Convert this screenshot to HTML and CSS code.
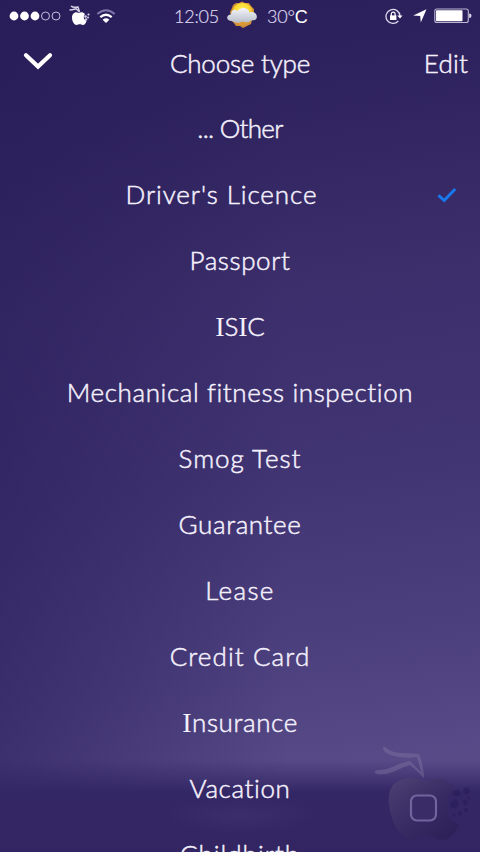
FILE: index.html
```html
<!DOCTYPE html>
<html lang="en">
<head>
<meta charset="utf-8">
<title>Choose type</title>
<link rel="stylesheet" href="styles.css">
</head>
<body>
<div class="screen">
  <header class="status">
    <div class="status-left">
      <svg class="signal" width="52" height="10" viewBox="0 0 52 10"><g fill="#fff"><circle cx="5" cy="5" r="4.400"/><circle cx="15.500" cy="5" r="4.400"/><circle cx="26" cy="5" r="4.400"/></g><g fill="none" stroke="#c4bddb" stroke-width="1"><circle cx="36.500" cy="5" r="4"/><circle cx="47" cy="5" r="4"/></g></svg>
      <svg class="carrier" width="22" height="22" viewBox="0 0 22 22"><path fill="#fff" d="M9.500 8C6 6 3 9 3 12.500C3 16 5 20 7.500 20C9 20 9.500 19.300 10.700 19.300C12 19.300 12.500 20 14 20C15.500 20 17 18 17.500 16C14.500 14.500 14 11.500 16 9C14 6.500 11.500 7 9.500 8Z"/><path d="M2 1Q4 3 9 2L10.500 7M.5 5Q3 5 7 3.800L10.500 7" fill="none" stroke="#d8d2e8" stroke-width="1.500"/><g fill="#d8d2e8"><circle cx="16.500" cy="11.500" r="1.300"/><circle cx="19.500" cy="9.500" r="1.100"/><circle cx="17" cy="14.500" r="1.300"/><circle cx="19" cy="12.500" r="1"/></g></svg>
      <svg class="wifi" width="20" height="15" viewBox="0 0 20 15"><path d="M1.300 5Q10-2.500 18.700 5" fill="none" stroke="#8176aa" stroke-width="1.700"/><path d="M4.300 8.200Q10 3.300 15.700 8.200" fill="none" stroke="#fff" stroke-width="2.200"/><path d="M6.600 10.700Q10 8 13.400 10.700L10 14Z" fill="#fff"/></svg>
    </div>
    <div class="status-mid">
      <span class="time">12:05</span>
      <svg class="weather" width="32" height="28" viewBox="0 0 32 28"><defs><radialGradient id="sun" cx=".5" cy=".3"><stop offset="0" stop-color="#fff45a"/><stop offset=".7" stop-color="#fbd52c"/><stop offset="1" stop-color="#dc9a35"/></radialGradient><linearGradient id="cloud" x2="0" y2="1"><stop offset="0" stop-color="#f4f5f9"/><stop offset="1" stop-color="#b7bdcb"/></linearGradient></defs><path fill="#cf8f39" d="M10 2L13 2L16 .5L19 2L23 2L25 5L28 8L28 12L29 15L26 19L25 23L21 25L17 27L14 25L10 25L7 21L4 19L5 15L4 11L6 7L7 4Z"/><circle cx="16.500" cy="13" r="11" fill="url(#sun)"/><path d="M6 20C-.5 20 0 13.500 5 13.500C5 9 9 7.500 11.500 10C15 5 23 7 23.500 11.500C29 9.500 32 14.500 30.500 17.500C29 20 26 19 25 19.500C21 23 18 20.500 16.500 20.500C12 23 9 21.500 6 20Z" fill="url(#cloud)"/></svg>
      <span class="temp">30°<b>C</b></span>
    </div>
    <div class="status-right">
      <svg class="lock" width="18" height="17" viewBox="0 0 18 17"><path d="M13.300 13A7 7 0 1 1 15 8" fill="none" stroke="#ddd8ec" stroke-width="1.300"/><path d="M12.300 7.500H17.500L15 10.600Z" fill="#fff"/><rect x="5" y="7.400" width="6.400" height="4.600" fill="#fff"/><path d="M6.300 8V6A1.900 1.900 0 0 1 10.100 6V8" fill="none" stroke="#fff" stroke-width="1.200"/></svg>
      <svg class="arrow" width="14" height="14" viewBox="0 0 14 14"><path d="M13.500 .3L7.800 13.600L7.200 7L.2 6.500Z" fill="#fff"/></svg>
      <svg class="battery" width="38" height="16" viewBox="0 0 38 16"><rect x=".8" y="1" width="33.500" height="13.500" rx="2" fill="none" stroke="#bdb6d3" stroke-width="1.100"/><rect x="2" y="2.300" width="26.500" height="11" rx=".8" fill="#fff"/><path d="M35.200 5.500Q37.500 5.500 37.500 7.800Q37.500 10 35.200 10Z" fill="#ded9ea"/></svg>
    </div>
  </header>
  <nav class="bar">
    <svg class="chevron" width="30" height="20" viewBox="0 0 30 20"><path d="M3 3.200L15 14.500L27 3.200" fill="none" stroke="#fff" stroke-width="4.200" stroke-linecap="round"/></svg>
    <span class="title">Choose type</span>
    <span class="edit">Edit</span>
  </nav>
  <ul class="list">
    <li><span class="t-other">... Other</span></li>
    <li class="selected"><span class="t-driver">Driver's Licence</span><svg class="check" width="22" height="18" viewBox="0 0 22 18"><path d="M2.500 9.300L8.200 14.500L19.200 3" fill="none" stroke="#1878ee" stroke-width="3"/></svg></li>
    <li><span>Passport</span></li>
    <li><span class="t-isic"><i>I</i>S<i>I</i>C</span></li>
    <li><span>Mechanical fitness inspection</span></li>
    <li><span class="t-smog">Smog Test</span></li>
    <li><span>Guarantee</span></li>
    <li><span class="t-lease">Lease</span></li>
    <li><span class="t-credit">Credit Card</span></li>
    <li><span><i>I</i>nsurance</span></li>
    <li><span>Vacation</span></li>
    <li><span class="t-child">Childbirth</span></li>
  </ul>
  <svg class="touch" width="110" height="110" viewBox="0 0 110 110"><defs><linearGradient id="body" x1="0" y1="0" x2="1" y2="1"><stop offset="0" stop-color="#524675"/><stop offset=".55" stop-color="#382a62"/><stop offset="1" stop-color="#291c54"/></linearGradient></defs><path fill="url(#body)" fill-opacity=".8" d="M53 43C44 37 30 40 23 46C16 53 17 66 20 77C24 91 31 101 40 102C48 102 49 98 56 98C63 98 64 102 73 102C80 101 85 94 88 86C80 84 76 79 76 72C76 62 78 56 84 50C76 39 64 39 53 43Z"/><path fill="#7d719f" fill-opacity=".48" d="M14 9C22 16 31 15 43 15.500L48 16C51 22 53 33 53 40L46 33L39 27C29 29 21 38 6 36C2 35 4 32 7 32C20 32 24 26 39 23L50 34L46 19C36 21 15 19 12 11C12 9 13 8 14 9Z"/><g fill="#201751" fill-opacity=".35"><path d="M82 53l6-1 2 4-4 3-4-2zM93 50l5-1 1 5-4 3-3-3zM79 64l6-3 3 5-3 5-6-2zM91 63l4-2 2 4-3 3zM87 74l4-1v5l-4-1z"/><circle cx="98" cy="60" r="1.500"/><circle cx="95" cy="72" r="2"/><circle cx="83" cy="77" r="1.500"/></g><rect x="40" y="57.500" width="25" height="25" rx="6" fill="#392c67" stroke="#7165a0" stroke-width="2.200"/></svg>
</div>
</body>
</html>
```
FILE: styles.css
```css
* { box-sizing: border-box; }
body { margin: 0; }
.screen {
  position: relative;
  width: 480px;
  height: 852px;
  overflow: hidden;
  color: #f4f0fc;
  font-family: Lato, "Liberation Sans", sans-serif;
  font-weight: 300;
  font-variant-ligatures: none;
  -webkit-text-stroke: .5px currentColor;
  background:
    radial-gradient(ellipse 75px 18px at 240px 816px, rgba(72, 57, 118, .4), transparent),
    linear-gradient(to bottom, transparent 760px, #342765 792px, #322562 852px),
    linear-gradient(to right, rgba(38, 27, 88, .5), transparent 60%),
    linear-gradient(172deg, #2a1e5a 0, #2f235f 14%, #3b2e6b 35%, #413472 55%, #4d407e 76%, #584b88 90%);
}
.status { display: grid; grid-template-columns: 172px 1fr 95px; height: 32px; }
.status-left { display: flex; align-items: center; padding-left: 9px; }
.carrier { margin-left: 8px; }
.wifi { margin-left: 5px; }
.status-mid { display: flex; align-items: center; font-size: 18px; white-space: nowrap; -webkit-text-stroke: .2px currentColor; }
.time { width: 45px; margin-left: 2px; letter-spacing: -.2px; color: #ddd7ee; }
.weather { margin: -2px 9px 0 7px; }
.temp { letter-spacing: -.2px; color: #ddd7ee; }
.temp b { font-family: "Liberation Sans", sans-serif; font-weight: 400; color: #fff; -webkit-text-stroke: 0; }
.status-right { display: flex; align-items: center; }
.arrow { margin-left: 10px; }
.battery { margin-left: 7px; }
.bar { display: grid; grid-template-columns: 100px 1fr 100px; align-items: center; height: 64px; padding-bottom: 2px; font-size: 26px; }
.chevron { margin: -3px 0 0 23px; }
.title { text-align: center; white-space: nowrap; letter-spacing: -.2px; }
.edit { justify-self: end; margin-right: 12px; letter-spacing: .2px; }
.list { margin: 0; padding: 0; list-style: none; font-size: 26px; }
.list li { display: grid; grid-template-columns: 60px 1fr 60px; align-items: center; height: 66px; }
.list li.selected { grid-template-columns: 60px 1fr 97px; }
.list span { grid-column: 2; padding-bottom: 2px; text-align: center; line-height: 32px; white-space: nowrap; letter-spacing: .6px; }
.list i { font-family: "Liberation Serif", serif; font-size: 28px; line-height: 1; font-style: normal; font-weight: 400; -webkit-text-stroke: 0; }
.list .t-isic { letter-spacing: -.2px; }
.list .t-driver { letter-spacing: .9px; }
.list .t-other { letter-spacing: -.7px; }
.list .t-credit { letter-spacing: 1.100px; }
.list .t-smog { letter-spacing: 1px; }
.list .t-lease { letter-spacing: 1.400px; }
.list .t-child { letter-spacing: 1px; }
.check { grid-column: 3; margin-left: 53px; }
.touch { position: absolute; left: 371px; top: 738px; }
```
